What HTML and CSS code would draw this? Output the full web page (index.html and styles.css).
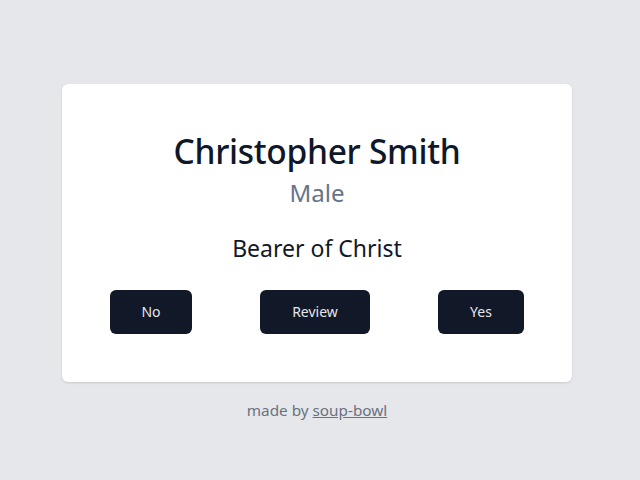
FILE: index.html
```html
<!DOCTYPE html>
<html lang="en">
<head>
<meta charset="utf-8">
<title>Name</title>
<link rel="stylesheet" href="styles.css">
</head>
<body>
<main class="page">
  <section class="card">
    <h1 class="name">Christopher Smith</h1>
    <p class="gender">Male</p>
    <p class="meaning">Bearer of Christ</p>
    <div class="actions">
      <button class="btn btn-no">No</button>
      <button class="btn btn-review">Review</button>
      <button class="btn btn-yes">Yes</button>
    </div>
  </section>
  <footer class="footer">made by <a href="#" class="link">soup-bowl</a></footer>
</main>
</body>
</html>
```

FILE: styles.css
```css
html, body {
  margin: 0;
  padding: 0;
  background: #e5e7eb;
  font-family: "Noto Sans", "Open Sans", sans-serif;
}
.page {
  width: 634px;
  height: 480px;
  display: flex;
  flex-direction: column;
  align-items: center;
  padding-top: 84px;
  box-sizing: border-box;
}
.card {
  width: 510px;
  height: 298px;
  box-sizing: border-box;
  background: #ffffff;
  border-radius: 6px;
  box-shadow: 0 1px 3px rgba(0,0,0,0.08), 0 1px 2px rgba(0,0,0,0.05);
  padding: 47px 48px 48px;
  display: flex;
  flex-direction: column;
  align-items: center;
}
.name {
  margin: 0;
  font-size: 33.5px;
  line-height: 40px;
  font-weight: 500;
  color: #0f172a;
  letter-spacing: -0.3px;
}
.gender {
  margin: 6px 0 0;
  font-size: 24px;
  line-height: 32px;
  color: #64748b;
}
.meaning {
  margin: 23px 0 0;
  font-size: 23px;
  line-height: 32px;
  color: #111827;
}
.actions {
  margin-top: 26px;
  width: 100%;
  display: flex;
  justify-content: space-between;
}
.btn {
  height: 44px;
  border: none;
  border-radius: 6px;
  background: #111827;
  color: #e5e7eb;
  font-family: "Noto Sans", sans-serif;
  font-size: 14px;
  padding: 0 0 2px;
}
.btn-no { width: 82px; }
.btn-review { width: 110px; }
.btn-yes { width: 86px; }
.footer {
  margin-top: 16px;
  font-size: 15.3px;
  line-height: 24px;
  color: #6b7280;
}
.link {
  color: #6b7280;
  text-decoration: underline;
}
```
